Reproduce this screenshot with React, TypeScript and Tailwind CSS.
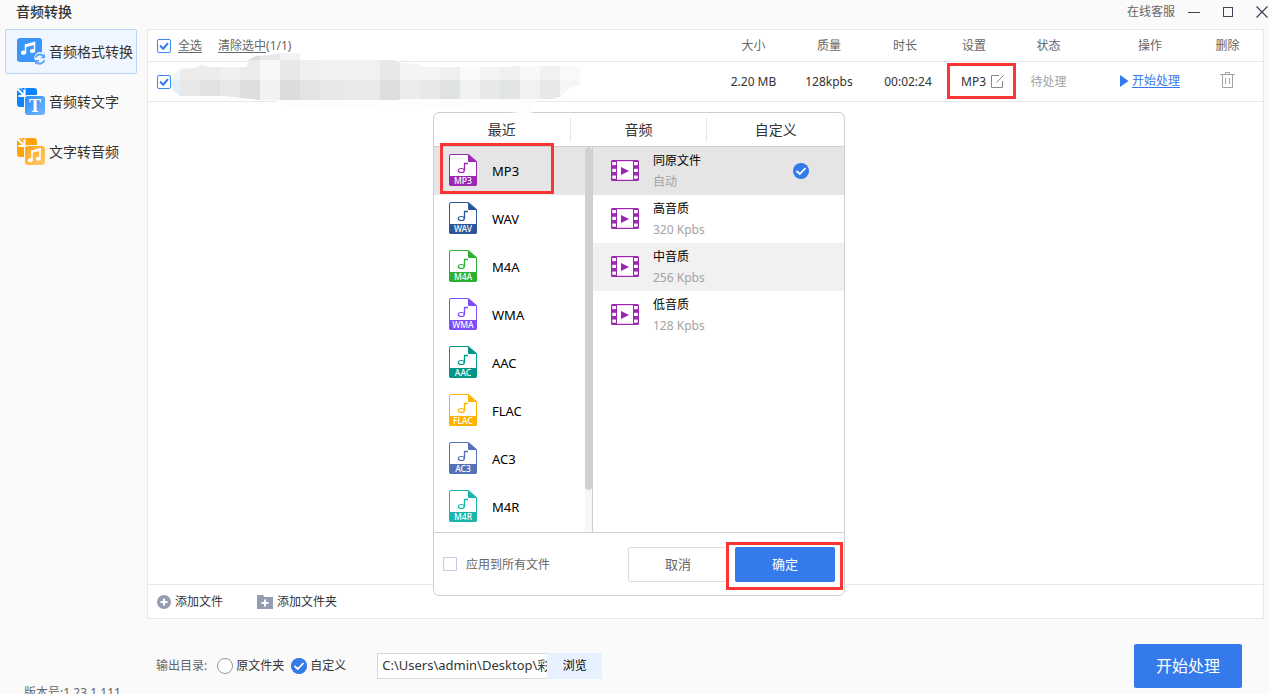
import { useState, type ReactNode } from 'react';

const FORMATS = [
  { name: 'MP3', color: '#9c27b0' },
  { name: 'WAV', color: '#2a579a' },
  { name: 'M4A', color: '#2bb033' },
  { name: 'WMA', color: '#7c4dff' },
  { name: 'AAC', color: '#009688' },
  { name: 'FLAC', color: '#ffb300' },
  { name: 'AC3', color: '#5472b8' },
  { name: 'M4R', color: '#17b5ac' },
];

const QUALITIES = [
  { name: '同原文件', rate: '自动' },
  { name: '高音质', rate: '320 Kpbs' },
  { name: '中音质', rate: '256 Kpbs' },
  { name: '低音质', rate: '128 Kpbs' },
];

// 20px mosaic columns: [upper, lower]
const MOSAIC = [
  ['#eff7fc', '#e3effb'],
  ['#ececec', '#e8e8e8'],
  ['#ececec', '#e1e1e1'],
  ['#f0f0f0', '#e8e8e8'],
  ['#ebebeb', '#dedede'],
  ['#f7f7f8', '#f2f2f2'],
  ['#e8e8e8', '#dcdcdc'],
  ['#f0f0f0', '#e3e3e3'],
  ['#f1f3f2', '#e8e8e8'],
  ['#f1f1f1', '#e9e9e9'],
  ['#f1f1f1', '#e9e9e9'],
  ['#e8e8e8', '#dddddd'],
  ['#f4f4f4', '#ececec'],
  ['#f4f4f4', '#e8e8e8'],
  ['#eef0ef', '#dfe3e2'],
  ['#fafafa', '#f1f1f1'],
  ['#f4f4f4', '#e8e8e8'],
  ['#f0f0f0', '#e0e4e3'],
  ['#f8f8f8', '#f1f1f1'],
  ['#f1f1f1', '#e8e8e8'],
  ['#f9f9f9', '#f6f6f6'],
];

function FormatConvertIcon() {
  return (
    <svg viewBox="0 0 28 28" className="h-7 w-7 shrink-0">
      <rect x="0" y="0" width="25" height="24" rx="3" fill="#3a96fb" />
      <path d="M8.500 14.500V7L17.500 4.500V13" fill="none" stroke="#fff" strokeWidth="1.500" />
      <path d="M8 6.500 18 3.800v3L8 9.500z" fill="#fff" />
      <ellipse cx="6.600" cy="14.700" rx="2.700" ry="2.100" fill="#fff" />
      <ellipse cx="15.600" cy="13" rx="2.700" ry="2.100" fill="#fff" />
      <path d="M17 20a6 6 0 0 1 8-5.500h3V27h-8z" fill="#eff6ff" />
      <path d="M18.500 19.500a4.600 4.600 0 0 1 8-1.300M27.300 22.200a4.600 4.600 0 0 1-8 1.800" fill="none" stroke="#5ba6fb" strokeWidth="2" />
      <path d="M28 15.500v4.700h-4.700zM18 26.700V22h4.700z" fill="#5ba6fb" />
    </svg>
  );
}

function StackedIcon({ back, front, light, children }: { back: string; front: string; light: string; children: ReactNode }) {
  const id = `front-${front.slice(1)}`;
  return (
    <svg viewBox="0 0 28 28" className="h-7 w-7 shrink-0">
      <linearGradient id={id} x1="0" y1="0" x2="1" y2="1">
        <stop offset="0" stopColor={front} />
        <stop offset="1" stopColor={light} />
      </linearGradient>
      <rect width="20" height="19" rx="3" fill={back} />
      <path d="M0 2.500 2.500 0H4L8 4V0" fill="none" stroke="#fafafa" strokeWidth=".8" />
      <path d="M.500 1 6.500 7M7.500 2v6H1.500" fill="none" stroke="#fff" strokeWidth="2" />
      <rect x="7" y="7" width="22" height="22" rx="3.500" fill="#fafafa" />
      <rect x="8" y="8" width="20" height="19" rx="3" fill={`url(#${id})`} />
      {children}
    </svg>
  );
}

function FileIcon({ name, color }: { name: string; color: string }) {
  return (
    <svg viewBox="0 0 28 32" className="mb-1 h-8 w-7 shrink-0">
      <path d="M2 .5h17.500l8 7V30a1.500 1.500 0 0 1-1.500 1.500H2A1.500 1.500 0 0 1 .5 30V2A1.500 1.500 0 0 1 2 .5z" fill="#fff" stroke={color} />
      <path d="M19 0l9 8h-8a1 1 0 0 1-1-1z" fill={color} />
      <path d="M0 22h28v8a2 2 0 0 1-2 2H2a2 2 0 0 1-2-2z" fill={color} />
      <ellipse cx="12.300" cy="16.500" rx="3" ry="2" fill="none" stroke={color} strokeWidth="1.200" />
      <path d="M15.500 16.500V9.500h3.500" fill="none" stroke={color} strokeWidth="1.300" />
      <text x="14" y="30" textAnchor="middle" fontSize="8.500" fontWeight="500" fill="#fff">{name}</text>
    </svg>
  );
}

function FilmIcon() {
  return (
    <svg viewBox="0 0 28 21" className="mb-0.5 h-[21px] w-7 shrink-0">
      <rect width="28" height="21" rx="1.500" fill="#9c27b0" />
      <rect x="6" y="1.200" width="16" height="18.600" fill="#fff" />
      <path d="M10 7 18 11l-8 4z" fill="#9c27b0" />
      {[2, 8.800, 15.500].map(y => (
        <g key={y} fill="#fff">
          <rect x="1.200" y={y} width="3.800" height="3.200" rx=".6" />
          <rect x="23" y={y} width="3.800" height="3.200" rx=".6" />
        </g>
      ))}
    </svg>
  );
}

function CheckCircle() {
  return (
    <svg viewBox="0 0 16 16" className="pointer-events-none h-4 w-4">
      <circle cx="8" cy="8" r="8" fill="#347aeb" />
      <path d="M3.500 8 6.800 11l5.700-6" fill="none" stroke="#fff" strokeWidth="1.800" />
    </svg>
  );
}

function Checkbox({ id, label }: { id: string; label?: string }) {
  return (
    <span className="relative inline-block h-3.5 w-3.5 shrink-0">
      <input
        id={id}
        type="checkbox"
        defaultChecked
        aria-label={label}
        className="peer block h-3.5 w-3.5 appearance-none rounded-xs border border-[#3a86f5] bg-white"
      />
      <svg viewBox="0 0 14 14" className="pointer-events-none absolute inset-0 hidden h-3.5 w-3.5 peer-checked:block">
        <path d="M3 6.500 6.200 9.700 11 4.200" fill="none" stroke="#347aeb" strokeWidth="2" />
      </svg>
    </span>
  );
}

function Radio({ id, checked, onChange }: { id: string; checked: boolean; onChange: () => void }) {
  return (
    <span className="relative inline-block h-4 w-4 shrink-0">
      <input
        id={id}
        type="radio"
        name="output"
        checked={checked}
        onChange={onChange}
        className="block h-4 w-4 appearance-none rounded-full border border-[#999] bg-white"
      />
      {checked && <span className="pointer-events-none absolute inset-0"><CheckCircle /></span>}
    </span>
  );
}

function Mosaic() {
  return (
    <svg viewBox="160 52 430 64" className="pointer-events-none absolute top-[22px] left-3 z-20 h-16 w-[430px]">
      <clipPath id="smear">
        <path d="M171 82 174 74 180 69 195 68 201 65 210 67 247 67 248 60 256 56 270 55 280 53 300 53V60H395L400 63 420 64 424 67 510 67 515 66H580V85L570 88 560 97 553 99H400L398 100H260L240 98 225 96H180L173 91z" />
      </clipPath>
      <path d="M269 99H535L533 112 527 114 510 112 440 108 400 104 370 107H290z" fill="#fdfdfd" />
      <g clipPath="url(#smear)">
        {MOSAIC.map(([top, bottom], i) => (
          <g key={i}>
            <rect x={160 + i * 20} y="60" width="20" height="20" fill={top} />
            <rect x={160 + i * 20} y="80" width="20" height="20" fill={bottom} />
          </g>
        ))}
        <rect x="240" y="50" width="20" height="10" fill="#dadada" />
        <rect x="260" y="50" width="20" height="10" fill="#e7e8e9" />
        <rect x="280" y="50" width="20" height="10" fill="#f3f3f3" />
      </g>
    </svg>
  );
}

function FormatDialog() {
  const [format, setFormat] = useState('MP3');
  const [quality, setQuality] = useState('同原文件');

  return (
    <div role="dialog" aria-label="MP3" className="absolute top-[82px] left-[285px] z-10 w-[412px] rounded-md border border-[#cfcfcf] bg-white">
      <div className="flex h-[34px] items-center border-b border-[#cfcfcf] text-sm text-[#333]">
        <button className="h-6 w-1/3 border-r border-[#e6e6e6]">最近</button>
        <button className="h-6 w-1/3 border-r border-[#e6e6e6]">音频</button>
        <button className="h-6 w-1/3">自定义</button>
      </div>

      <div className="flex h-[385px]">
        <ul className="w-[151px]">
          {FORMATS.map(f => (
            <li key={f.name} className="relative">
              <button
                onClick={() => setFormat(f.name)}
                className={`flex h-12 w-full items-center gap-[15px] pt-0.5 pl-[15px] text-[13px] text-black ${format === f.name ? 'bg-[#e5e5e5]' : ''}`}
              >
                <FileIcon name={f.name} color={f.color} />
                {f.name}
              </button>
              {f.name === 'MP3' && (
                <span className="pointer-events-none absolute -top-1 left-1.5 h-[51px] w-[114px] border-3 border-[#fb3535]" />
              )}
            </li>
          ))}
        </ul>
        <div className="w-2 border-r border-[#cfcfcf] bg-[#f8f8f8]">
          <div className="h-[343px] rounded-sm bg-[#d1d1d1]" />
        </div>
        <ul className="flex-1">
          {QUALITIES.map(q => (
            <li key={q.name}>
              <button
                onClick={() => setQuality(q.name)}
                className={`flex h-12 w-full items-center pr-[35px] pl-[18px] text-left text-xs ${quality === q.name ? 'bg-[#e5e5e5]' : q.name === '中音质' ? 'bg-[#f1f1f1]' : ''}`}
              >
                <FilmIcon />
                <span className="ml-3.5 flex-1 leading-[21px] text-black">
                  {q.name}
                  <span className="block text-[#a3a3a3]">{q.rate}</span>
                </span>
                {quality === q.name && <CheckCircle />}
              </button>
            </li>
          ))}
        </ul>
      </div>

      <div className="flex h-[63px] items-center border-t border-[#cfcfcf] px-[9px]">
        <input id="apply-all" type="checkbox" className="h-3.5 w-3.5 appearance-none border border-[#c5cbe0] bg-white checked:bg-[#347aeb]" />
        <label htmlFor="apply-all" className="pt-0.5 pl-[9px] text-xs text-[#666]">应用到所有文件</label>
        <button className="ml-auto h-[35px] w-[100px] rounded-xs border border-[#dcdcdc] pt-0.5 text-[13px] text-[#666]">取消</button>
        <div className="relative ml-[7px]">
          <button className="block h-[35px] w-[100px] rounded-xs bg-[#347aeb] pt-0.5 text-[13px] text-white">确定</button>
          <span className="pointer-events-none absolute -top-[5px] -left-[9px] h-12 w-[117px] border-3 border-[#fb3535]" />
        </div>
      </div>
    </div>
  );
}

function Note() {
  return (
    <>
      <path d="M15 22V13L23 11V20.500" fill="none" stroke="#fff" strokeWidth="1.500" />
      <path d="M14.300 12.500 23.700 10.200v2.600L14.300 15z" fill="#fff" />
      <ellipse cx="13.300" cy="22.300" rx="2.500" ry="2" fill="#fff" />
      <ellipse cx="21.300" cy="20.800" rx="2.500" ry="2" fill="#fff" />
    </>
  );
}

export default function App() {
  const [output, setOutput] = useState('custom');

  return (
    <div className="flex h-screen flex-col overflow-hidden bg-[#fafafa] font-['Noto_Sans','Noto_Sans_CJK_SC',sans-serif] text-xs text-[#333]">
      <header className="flex h-[29px] shrink-0 items-center pb-[5px] pl-4">
        <h1 className="text-sm font-medium">音频转换</h1>
        <a href="#service" className="ml-auto text-[#666]">在线客服</a>
        <button aria-label="最小化" className="ml-[13px]">
          <svg viewBox="0 0 12 12" className="h-3 w-3"><path d="M0 6.500h12" stroke="#3d4256" /></svg>
        </button>
        <button aria-label="最大化" className="ml-[22px]">
          <svg viewBox="0 0 12 12" className="h-3 w-3"><rect x="1.500" y="1.500" width="9" height="9" fill="none" stroke="#3d4256" /></svg>
        </button>
        <button aria-label="关闭" className="mr-px ml-[22px]">
          <svg viewBox="0 0 12 12" className="h-3 w-3"><path d="M.5.5l11 11M11.500.5l-11 11" stroke="#3d4256" strokeWidth="1.200" /></svg>
        </button>
      </header>

      <div className="flex min-h-0 flex-1">
        <nav className="flex w-[147px] shrink-0 flex-col pr-2.5 pl-[5px] text-sm">
          <div className="flex flex-col gap-[5px]">
            <a href="#format" className="flex h-[45px] items-center gap-1 rounded-xs border border-[#b7d5fb] bg-[#eff6ff] pl-[11px] whitespace-nowrap">
              <FormatConvertIcon />
              音频格式转换
            </a>
            <a href="#to-text" className="flex h-[45px] items-center gap-1 pl-3 whitespace-nowrap">
              <StackedIcon back="#0a84ff" front="#2a90fd" light="#6fb5fd">
                <text x="18" y="24" textAnchor="middle" fontSize="18" fontWeight="700" fill="#fff" className="font-['Liberation_Serif',serif]">T</text>
              </StackedIcon>
              音频转文字
            </a>
            <a href="#to-audio" className="flex h-[45px] items-center gap-1 pl-3 whitespace-nowrap">
              <StackedIcon back="#ffa30a" front="#ffa61a" light="#fdca6c">
                <Note />
              </StackedIcon>
              文字转音频
            </a>
          </div>
          <p className="mt-auto -mb-[7px] ml-[19px] text-xs text-[#666]">版本号:1.23.1.111</p>
        </nav>

        <main className="flex min-w-0 flex-1 flex-col pr-[5px]">
          <section className="relative flex flex-1 flex-col border border-[#e8e8e8] bg-white">
            <table className="w-full table-fixed border-separate border-spacing-0 text-center">
              <colgroup>
                <col />
                <col className="w-[75px]" />
                <col className="w-[76px]" />
                <col className="w-[76px]" />
                <col className="w-[62px]" />
                <col className="w-[87px]" />
                <col className="w-[116px]" />
                <col className="w-[55px]" />
              </colgroup>
              <thead className="text-[#666]">
                <tr className="h-8 *:border-b *:border-[#e8e8e8] *:p-0 *:font-normal">
                  <th>
                    <div className="flex items-center pl-[9px]">
                      <Checkbox id="all" />
                      <label htmlFor="all" className="ml-[7px] underline underline-offset-2">全选</label>
                      <a href="#clear" className="ml-4 underline underline-offset-2">清除选中</a>(1/1)
                    </div>
                  </th>
                  <th>大小</th>
                  <th>质量</th>
                  <th>时长</th>
                  <th>设置</th>
                  <th>状态</th>
                  <th>操作</th>
                  <th><span className="pr-4">删除</span></th>
                </tr>
              </thead>
              <tbody>
                <tr className="h-10 *:border-b *:border-[#e8e8e8] *:p-0">
                  <td><div className="flex pl-[9px]"><Checkbox id="row" label="MP3" /></div></td>
                  <td>2.20 MB</td>
                  <td>128kpbs</td>
                  <td><div className="pl-1.5">00:02:24</div></td>
                  <td className="relative">
                    <button className="flex items-center gap-[5px] pl-[18px]">
                      MP3
                      <svg viewBox="0 0 13 13" className="h-[13px] w-[13px] shrink-0">
                        <path d="M8 .5H.5v12h11V6M5.500 7.500l7-7" fill="none" stroke="#888" />
                      </svg>
                    </button>
                    <span className="pointer-events-none absolute top-px left-1 h-9 w-[69px] border-3 border-[#fb3535]" />
                  </td>
                  <td className="text-[#a3a3a3]">待处理</td>
                  <td>
                    <button className="inline-flex items-center gap-[3px] text-[#347aeb]">
                      <svg viewBox="0 0 9 12" className="h-3 w-[9px]"><path d="M0 0 8.500 6 0 12z" fill="#347aeb" /></svg>
                      <span className="underline underline-offset-2">开始处理</span>
                    </button>
                  </td>
                  <td>
                    <button aria-label="删除" className="block w-[38px] pb-1">
                      <svg viewBox="0 0 15 16" className="mx-auto h-4 w-[15px]">
                        <path d="M0 2.500h15M5.500 2V.5h4V2M2.500 2.500v13h10v-13M5.500 6v6M9.500 6v6" fill="none" stroke="#a3a3a3" />
                      </svg>
                    </button>
                  </td>
                </tr>
              </tbody>
            </table>
            <Mosaic />
            <FormatDialog />

            <div className="mt-auto flex h-[34px] items-center border-t border-[#e8e8e8] pl-[9px]">
              <button className="flex items-center gap-1">
                <svg viewBox="0 0 14 14" className="h-3.5 w-3.5">
                  <circle cx="7" cy="7" r="7" fill="#969db1" />
                  <path d="M7 3.500v7M3.500 7h7" stroke="#fff" strokeWidth="2" />
                </svg>
                添加文件
              </button>
              <button className="ml-[34px] flex items-center gap-1">
                <svg viewBox="0 0 16 14" className="h-3.5 w-4">
                  <path d="M0 0h6l1.500 2H16v12H0z" fill="#969db1" />
                  <path d="M8 4.500v7M4.500 8h7" stroke="#fff" strokeWidth="2" />
                </svg>
                添加文件夹
              </button>
            </div>
          </section>

          <footer className="flex h-[75px] shrink-0 items-center pt-[19px] pr-[22px] pl-[9px]">
            <span className="text-[#666]">输出目录:</span>
            <span className="ml-2.5 flex items-center gap-[3px]">
              <Radio id="source" checked={output === 'source'} onChange={() => setOutput('source')} />
              <label htmlFor="source">原文件夹</label>
            </span>
            <span className="ml-[7px] flex items-center gap-[3px]">
              <Radio id="custom" checked={output === 'custom'} onChange={() => setOutput('custom')} />
              <label htmlFor="custom">自定义</label>
            </span>
            <div className="ml-[31px] flex h-[26px]">
              <input
                type="text"
                aria-label="输出目录"
                defaultValue="C:\Users\admin\Desktop\彩"
                className="w-[170px] border border-r-0 border-[#d9d9d9] bg-white pl-1 text-[13px]"
              />
              <button className="w-[55px] bg-[#e8f1ff] text-black">浏览</button>
            </div>
            <button className="ml-auto h-11 w-[108px] rounded-xs bg-[#347aeb] text-base text-white">开始处理</button>
          </footer>
        </main>
      </div>
    </div>
  );
}
